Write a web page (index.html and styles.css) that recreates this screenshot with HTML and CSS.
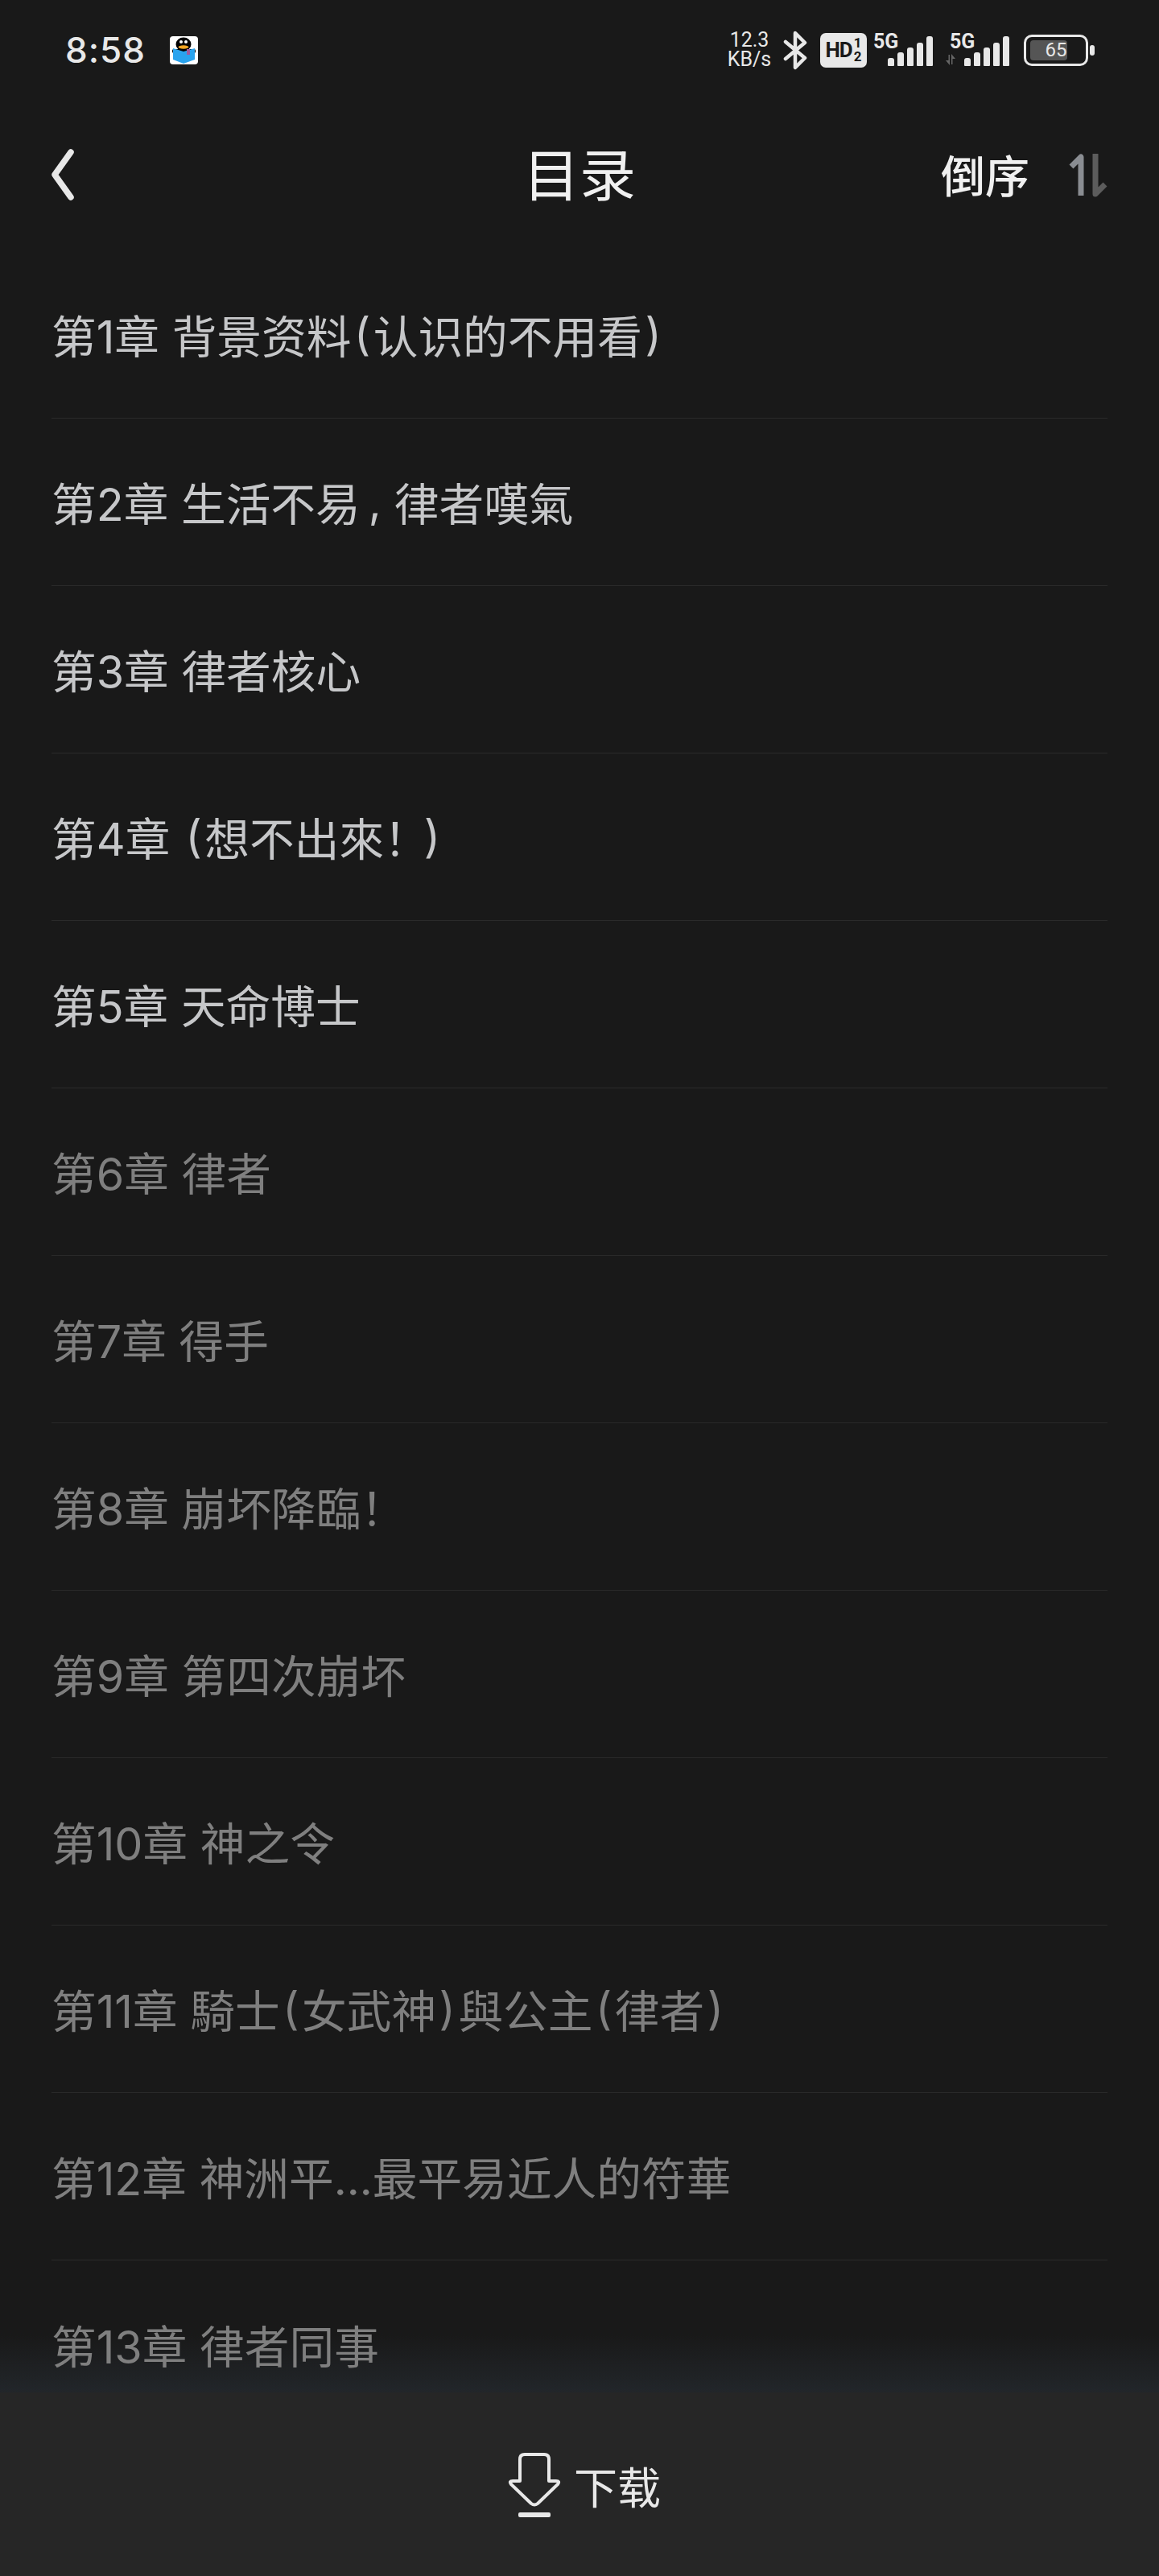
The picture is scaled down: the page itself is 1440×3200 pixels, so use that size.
FILE: index.html
```html
<!DOCTYPE html>
<html>
<head>
    <title>目录</title>
    <link rel="stylesheet" href="styles.css">
</head>
<body>
    <div class="page">
        <div class="statusbar">
            <div class="status-left">
                <span class="time">8:58</span>
                <svg class="app-icon" width="35" height="35" viewBox="0 0 35 35">
                    <rect width="35" height="35" rx="4" fill="#fff"/>
                    <ellipse cx="17" cy="10" rx="9.500" ry="8.500" fill="#000"/>
                    <circle cx="14" cy="7" r="2" fill="#fff"/>
                    <circle cx="20" cy="7" r="2" fill="#fff"/>
                    <ellipse cx="17" cy="13.500" rx="6.500" ry="2.200" fill="#f5a623"/>
                    <rect x="3" y="16" width="29" height="5" rx="2" fill="#000"/>
                    <path d="M4 15 L17 19 L31 15 V29 L17 34 L4 29 Z" fill="#29a3ee"/>
                    <rect x="21" y="16" width="4" height="7" fill="#a05a9a"/>
                </svg>
            </div>
            <div class="status-right">
                <div class="speed"><span>12.3</span><span>KB/s</span></div>
                <svg class="bt" width="30" height="49" viewBox="0 0 30 49">
                    <path d="M3 14 L27 34 L15 46 V3 L27 15 L3 35" fill="none" stroke="#e8e8e8" stroke-width="4.500" stroke-linejoin="round" stroke-linecap="round"/>
                </svg>
                <div class="hd"><b>HD</b><span class="hd-sub"><i>1</i><i>2</i></span></div>
                <div class="signal">
                    <span class="five-g">5G</span>
                    <div class="bars"><i class="b1"></i><i class="b2"></i><i class="b3"></i><i class="b4"></i><i class="b5"></i></div>
                </div>
                <div class="signal signal-two">
                    <span class="five-g">5G</span>
                    <svg class="arrows" width="12" height="14" viewBox="0 0 12 14"><path d="M0 8 H3.500 V1 H5 V14 Z M7 0 L12 6 H8.500 V13 H7 Z" fill="#666"/></svg>
                    <div class="bars"><i class="b1"></i><i class="b2"></i><i class="b3"></i><i class="b4"></i><i class="b5"></i></div>
                </div>
                <div class="battery">
                    <div class="battery-body"><div class="battery-fill"></div><span>65</span></div>
                    <div class="battery-cap"></div>
                </div>
            </div>
        </div>

        <div class="navbar">
            <svg class="back" width="28" height="64" viewBox="0 0 28 64">
                <path d="M24 4 L4 32 L24 60" fill="none" stroke="#e8e8e8" stroke-width="7.500" stroke-linecap="round" stroke-linejoin="round"/>
            </svg>
            <h1 class="title">目录</h1>
            <div class="sort">
                <span class="sort-label">倒序</span>
                <svg width="48" height="54" viewBox="0 0 48 54">
                    <path d="M3 16 L15 4 V52" fill="none" stroke="#8a8d92" stroke-width="7" stroke-linejoin="round"/>
                    <path d="M33 0 V50 L45 38" fill="none" stroke="#5c5c5c" stroke-width="7" stroke-linejoin="round"/>
                </svg>
            </div>
        </div>

        <ul class="chapters">
            <li class="read">第1章 背景资料<span class="paren">(</span>认识的不用看<span class="paren">)</span></li>
            <li class="read">第2章 生活不易<span class="comma">,</span>律者嘆氣</li>
            <li class="read">第3章 律者核心</li>
            <li class="read">第4章 <span class="paren">(</span>想不出來<span class="bang">！</span>)</li>
            <li class="read">第5章 天命博士</li>
            <li>第6章 律者</li>
            <li>第7章 得手</li>
            <li>第8章 崩坏降臨！</li>
            <li>第9章 第四次崩坏</li>
            <li>第10章 神之令</li>
            <li>第11章 騎士<span class="paren">(</span>女武神<span class="paren">)</span>與公主<span class="paren">(</span>律者<span class="paren">)</span></li>
            <li>第12章 神洲平...最平易近人的符華</li>
            <li>第13章 律者同事</li>
        </ul>

        <div class="footer">
            <div class="fade"></div>
            <div class="download">
                <svg width="66" height="80" viewBox="0 0 66 80">
                    <path d="M15 35 V8 Q15 2 21 2 H45 Q51 2 51 8 V35 H60 Q65 35 62 39 L37 63 Q33 66 29 63 L4 39 Q1 35 6 35 Z" fill="none" stroke="#e8e8e8" stroke-width="4" stroke-linejoin="round"/>
                    <rect x="13" y="74" width="40" height="6" rx="2" fill="#e8e8e8"/>
                </svg>
                <span>下载</span>
            </div>
        </div>
    </div>
</body>
</html>
```

FILE: styles.css
```css
* {
    box-sizing: border-box;
}

body {
    margin: 0;
    background-color: #191919;
    font-family: Roboto, "Noto Sans CJK SC", sans-serif;
}

.page {
    width: 1440px;
    height: 3200px;
    display: flex;
    flex-direction: column;
    overflow: hidden;
    position: relative;
}

/* status bar */
.statusbar {
    height: 124px;
    padding: 20px 80px 0 81px;
    display: flex;
    justify-content: space-between;
    align-items: flex-start;
    color: #e8e8e8;
}

.status-left {
    height: 84px;
    display: flex;
    align-items: center;
    gap: 30px;
}

.time {
    font-family: Inter, sans-serif;
    font-size: 44px;
    font-weight: 500;
    letter-spacing: 1px;
}

.status-right {
    height: 84px;
    display: flex;
    align-items: center;
}

.speed {
    width: 56px;
    display: flex;
    flex-direction: column;
    align-items: center;
    font-size: 25px;
    line-height: 24px;
}

.bt {
    margin-left: 14px;
}

.hd {
    width: 58px;
    height: 43px;
    margin-left: 16px;
    background-color: #e8e8e8;
    border-radius: 7px;
    color: #191919;
    display: flex;
    align-items: center;
    justify-content: center;
    font-size: 26px;
}

.hd b {
    letter-spacing: -1px;
}

.hd-sub {
    display: flex;
    flex-direction: column;
    margin-left: 2px;
    font-size: 17px;
    line-height: 17px;
    font-weight: bold;
}

.hd-sub i {
    font-style: normal;
}

.signal {
    width: 74px;
    height: 40px;
    margin-left: 8px;
    position: relative;
}

.signal-two {
    margin-left: 21px;
}

.five-g {
    position: absolute;
    left: 0;
    top: -3px;
    font-size: 25px;
    font-weight: bold;
    line-height: 26px;
}

.arrows {
    position: absolute;
    left: -5px;
    bottom: 1px;
}

.bars {
    position: absolute;
    right: 0;
    bottom: 0;
    display: flex;
    align-items: flex-end;
    gap: 4px;
}

.bars i {
    display: block;
    width: 8px;
    background-color: #e8e8e8;
    border-radius: 3px 3px 1px 1px;
}

.bars .b1 { height: 10px; }
.bars .b2 { height: 17px; }
.bars .b3 { height: 23px; }
.bars .b4 { height: 29px; }
.bars .b5 { height: 37px; }

.battery {
    margin-left: 18px;
    display: flex;
    align-items: center;
    gap: 2px;
}

.battery-body {
    width: 80px;
    height: 39px;
    border: 3px solid #e8e8e8;
    border-radius: 10px;
    padding: 4px 5px;
    position: relative;
}

.battery-fill {
    width: 46px;
    height: 100%;
    background-color: #555;
    border-radius: 4px;
}

.battery-body span {
    position: absolute;
    left: 0;
    right: 0;
    top: 0;
    text-align: center;
    font-size: 24px;
    line-height: 33px;
    color: #e8e8e8;
}

.battery-cap {
    width: 6px;
    height: 13px;
    background-color: #e8e8e8;
    border-radius: 3px;
}

/* top nav */
.navbar {
    height: 188px;
    padding: 0 64px 0 64px;
    display: flex;
    align-items: center;
    position: relative;
}

.back {
    margin-bottom: 2px;
}

.title {
    position: absolute;
    left: 0;
    right: 0;
    top: 2px;
    margin: 0;
    text-align: center;
    font-size: 70px;
    font-weight: normal;
    line-height: 188px;
    color: #f0f0f0;
}

.sort {
    margin-left: auto;
    display: flex;
    align-items: center;
    gap: 49px;
    font-size: 55px;
    font-weight: 500;
    color: #f0f0f0;
}

.sort-label {
    margin-bottom: 6px;
}

/* chapter list */
.chapters {
    list-style: none;
    margin: 0;
    padding: 0 64px;
    font-family: Inter, "Noto Sans CJK SC", sans-serif;
    font-size: 55.700px;
    position: relative;
    z-index: 1;
}

.chapters li {
    height: 208px;
    padding-bottom: 2px;
    display: flex;
    align-items: center;
    border-bottom: 1px solid #2a2a2a;
    color: #7f7f7f;
    white-space: pre;
}

.chapters li:last-child {
    border-bottom: none;
}

.chapters .read {
    color: #c6c7c9;
}

.comma {
    margin: 0 16px 0 10px;
}

.paren {
    padding: 0 3.500px;
}

.bang {
    margin-right: -6px;
}

/* bottom bar */
.footer {
    position: absolute;
    left: 0;
    right: 0;
    bottom: 0;
    height: 300px;
}

.fade {
    height: 72px;
    background: linear-gradient(rgba(25, 25, 25, 0), #22262a);
}

.download {
    height: 228px;
    padding: 2px 0 0 12px;
    background-color: #262626;
    display: flex;
    align-items: center;
    justify-content: center;
    gap: 16px;
    color: #e8e8e8;
    font-size: 54px;
}
```
